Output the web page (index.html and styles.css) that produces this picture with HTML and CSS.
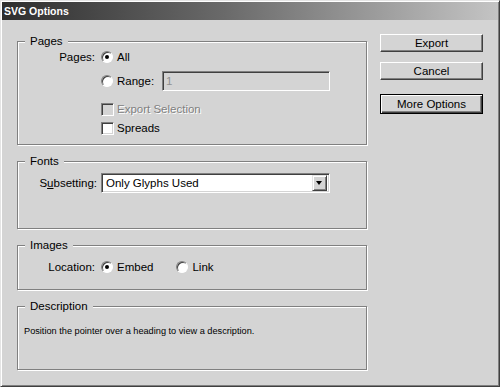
FILE: index.html
```html
<!DOCTYPE html>
<html lang="en">
<head>
    <meta charset="UTF-8">
    <title>SVG Options</title>
    <link rel="stylesheet" href="styles.css">
</head>
<body>
    <div class="dialog">
        <div class="titlebar">SVG Options</div>
        <div class="content">
            <div class="groups">
                <fieldset class="group group-pages">
                    <legend>Pages</legend>
                    <div class="row row-all">
                        <span class="label">Pages:</span>
                        <span class="radio checked"></span>
                        <span class="opt">All</span>
                    </div>
                    <div class="row row-range">
                        <span class="label"></span>
                        <span class="radio"></span>
                        <span class="opt">Range:</span>
                        <span class="field disabled">1</span>
                    </div>
                    <div class="row row-export">
                        <span class="label"></span>
                        <span class="check disabled"></span>
                        <span class="opt opt-disabled">Export Selection</span>
                    </div>
                    <div class="row row-spreads">
                        <span class="label"></span>
                        <span class="check"></span>
                        <span class="opt">Spreads</span>
                    </div>
                </fieldset>

                <fieldset class="group group-fonts">
                    <legend>Fonts</legend>
                    <div class="row row-subset">
                        <span class="label label-wide">S<u>u</u>bsetting:</span>
                        <div class="select">
                            <span class="select-value">Only Glyphs Used</span>
                            <span class="select-arrow"></span>
                        </div>
                    </div>
                </fieldset>

                <fieldset class="group group-images">
                    <legend>Images</legend>
                    <div class="row row-location">
                        <span class="label">Location:</span>
                        <span class="radio checked"></span>
                        <span class="opt">Embed</span>
                        <span class="radio radio-link"></span>
                        <span class="opt">Link</span>
                    </div>
                </fieldset>

                <fieldset class="group group-desc">
                    <legend>Description</legend>
                    <p class="desc">Position the pointer over a heading to view a description.</p>
                </fieldset>
            </div>

            <div class="buttons">
                <div class="btn">Export</div>
                <div class="btn btn-cancel">Cancel</div>
                <div class="btn btn-default">More Options</div>
            </div>
        </div>
    </div>
</body>
</html>
```

FILE: styles.css
```css
body {
    margin: 0;
    padding: 0;
    background-color: #d4d4d4;
    font-family: "Liberation Sans", Arial, sans-serif;
    font-size: 11.5px;
    color: #000;
}
.dialog {
    box-sizing: border-box;
    width: 500px;
    height: 387px;
    background-color: #d4d4d4;
    border: 1px solid;
    border-color: #e4e4e4 #404040 #404040 #e4e4e4;
    box-shadow: inset 1px 1px 0 #fff, inset -1px -1px 0 #808080;
    padding: 1px;
}
.titlebar {
    height: 18px;
    line-height: 18px;
    padding-left: 2px;
    background: linear-gradient(to right, #2e2e2e, #6a6a6a 45%, #c4c4c4);
    color: #fff;
    font-weight: bold;
    font-size: 10.5px;
}
.content {
    display: flex;
    padding: 14px 0 0 15px;
}
.groups {
    width: 350px;
}
.group {
    margin: 0;
    padding: 0;
    min-width: 0;
    border: 1px solid #808080;
    box-shadow: inset 1px 1px 0 #fff, 1px 1px 0 #fff;
}
.group + .group {
    margin-top: 9px;
}
legend {
    margin-left: 7px;
    padding: 0 5px;
    line-height: 15px;
    background-color: #d4d4d4;
}
.row {
    display: flex;
    align-items: center;
    height: 16px;
}
.label {
    width: 77px;
    margin-right: 6px;
    text-align: right;
    flex: none;
}
.label-wide {
    width: 79px;
    margin-right: 4px;
}
.opt {
    margin-left: 4px;
}
.opt-disabled {
    color: #808080;
    text-shadow: 1px 1px 0 #fff;
}
.radio {
    position: relative;
    box-sizing: border-box;
    width: 12px;
    height: 12px;
    flex: none;
    border-radius: 50%;
    background-color: #fff;
    border: 1px solid;
    border-color: #808080 #fff #fff #808080;
    box-shadow: inset 1px 1px 0 #404040;
}
.radio.checked::after {
    content: "";
    position: absolute;
    left: 3px;
    top: 3px;
    width: 4px;
    height: 4px;
    border-radius: 50%;
    background-color: #000;
}
.radio-link {
    margin-left: 23px;
}
.check {
    box-sizing: border-box;
    width: 13px;
    height: 13px;
    flex: none;
    background-color: #fff;
    border: 1px solid;
    border-color: #808080 #fff #fff #808080;
    box-shadow: inset 1px 1px 0 #404040, inset -1px -1px 0 #d4d4d4;
}
.check + .opt {
    margin-left: 3px;
}
.check.disabled {
    background-color: #d4d4d4;
}

/* pages group */
.row-all {
    margin-top: 0;
}
.row-range {
    height: 20px;
    margin-top: 6px;
}
.row-export {
    margin-top: 10px;
}
.row-spreads {
    margin-top: 3px;
}
.group-pages {
    padding-bottom: 8px;
}
.field {
    box-sizing: border-box;
    width: 168px;
    height: 20px;
    margin-left: 8px;
    padding-left: 3px;
    line-height: 18px;
    border: 1px solid;
    border-color: #808080 #fff #fff #808080;
    box-shadow: inset 1px 1px 0 #404040, inset -1px -1px 0 #d4d4d4;
}
.field.disabled {
    color: #909090;
    background-color: #d4d4d4;
}

/* fonts group */
.group-fonts {
    padding-bottom: 35px;
}
.row-subset {
    height: 20px;
    margin-top: 4px;
}
.select {
    box-sizing: border-box;
    display: flex;
    align-items: center;
    justify-content: space-between;
    width: 229px;
    height: 20px;
    padding: 2px;
    background-color: #fff;
    border: 1px solid;
    border-color: #808080 #fff #fff #808080;
    box-shadow: inset 1px 1px 0 #404040, inset -1px -1px 0 #d4d4d4;
}
.select-value {
    padding-left: 2px;
}
.select-arrow {
    position: relative;
    box-sizing: border-box;
    width: 15px;
    height: 16px;
    background-color: #d4d4d4;
    border: 1px solid;
    border-color: #e4e4e4 #404040 #404040 #e4e4e4;
    box-shadow: inset 1px 1px 0 #fff, inset -1px -1px 0 #808080;
}
.select-arrow::after {
    content: "";
    position: absolute;
    left: 3px;
    top: 5px;
    border-left: 3.5px solid transparent;
    border-right: 3.5px solid transparent;
    border-top: 4px solid #000;
}

/* images group */
.group-images {
    padding-bottom: 14px;
}
.row-location {
    margin-top: 6px;
}

/* description group */
.group-desc {
    height: 71px;
    box-sizing: border-box;
}
.desc {
    margin: 11px 0 0 6px;
    font-size: 9.2px;
    line-height: 12px;
}

/* buttons */
.buttons {
    margin-left: 13px;
    width: 103px;
}
.btn {
    box-sizing: border-box;
    height: 18px;
    line-height: 16px;
    text-align: center;
    border: 1px solid;
    border-color: #fff #404040 #404040 #fff;
    box-shadow: inset -1px -1px 0 #808080;
}
.btn-cancel {
    margin-top: 10px;
}
.btn-default {
    margin-top: 14px;
    height: 20px;
    line-height: 18px;
    border-color: #000;
    box-shadow: inset 1px 1px 0 #fff, inset -1px -1px 0 #404040, inset -2px -2px 0 #808080;
}
```
